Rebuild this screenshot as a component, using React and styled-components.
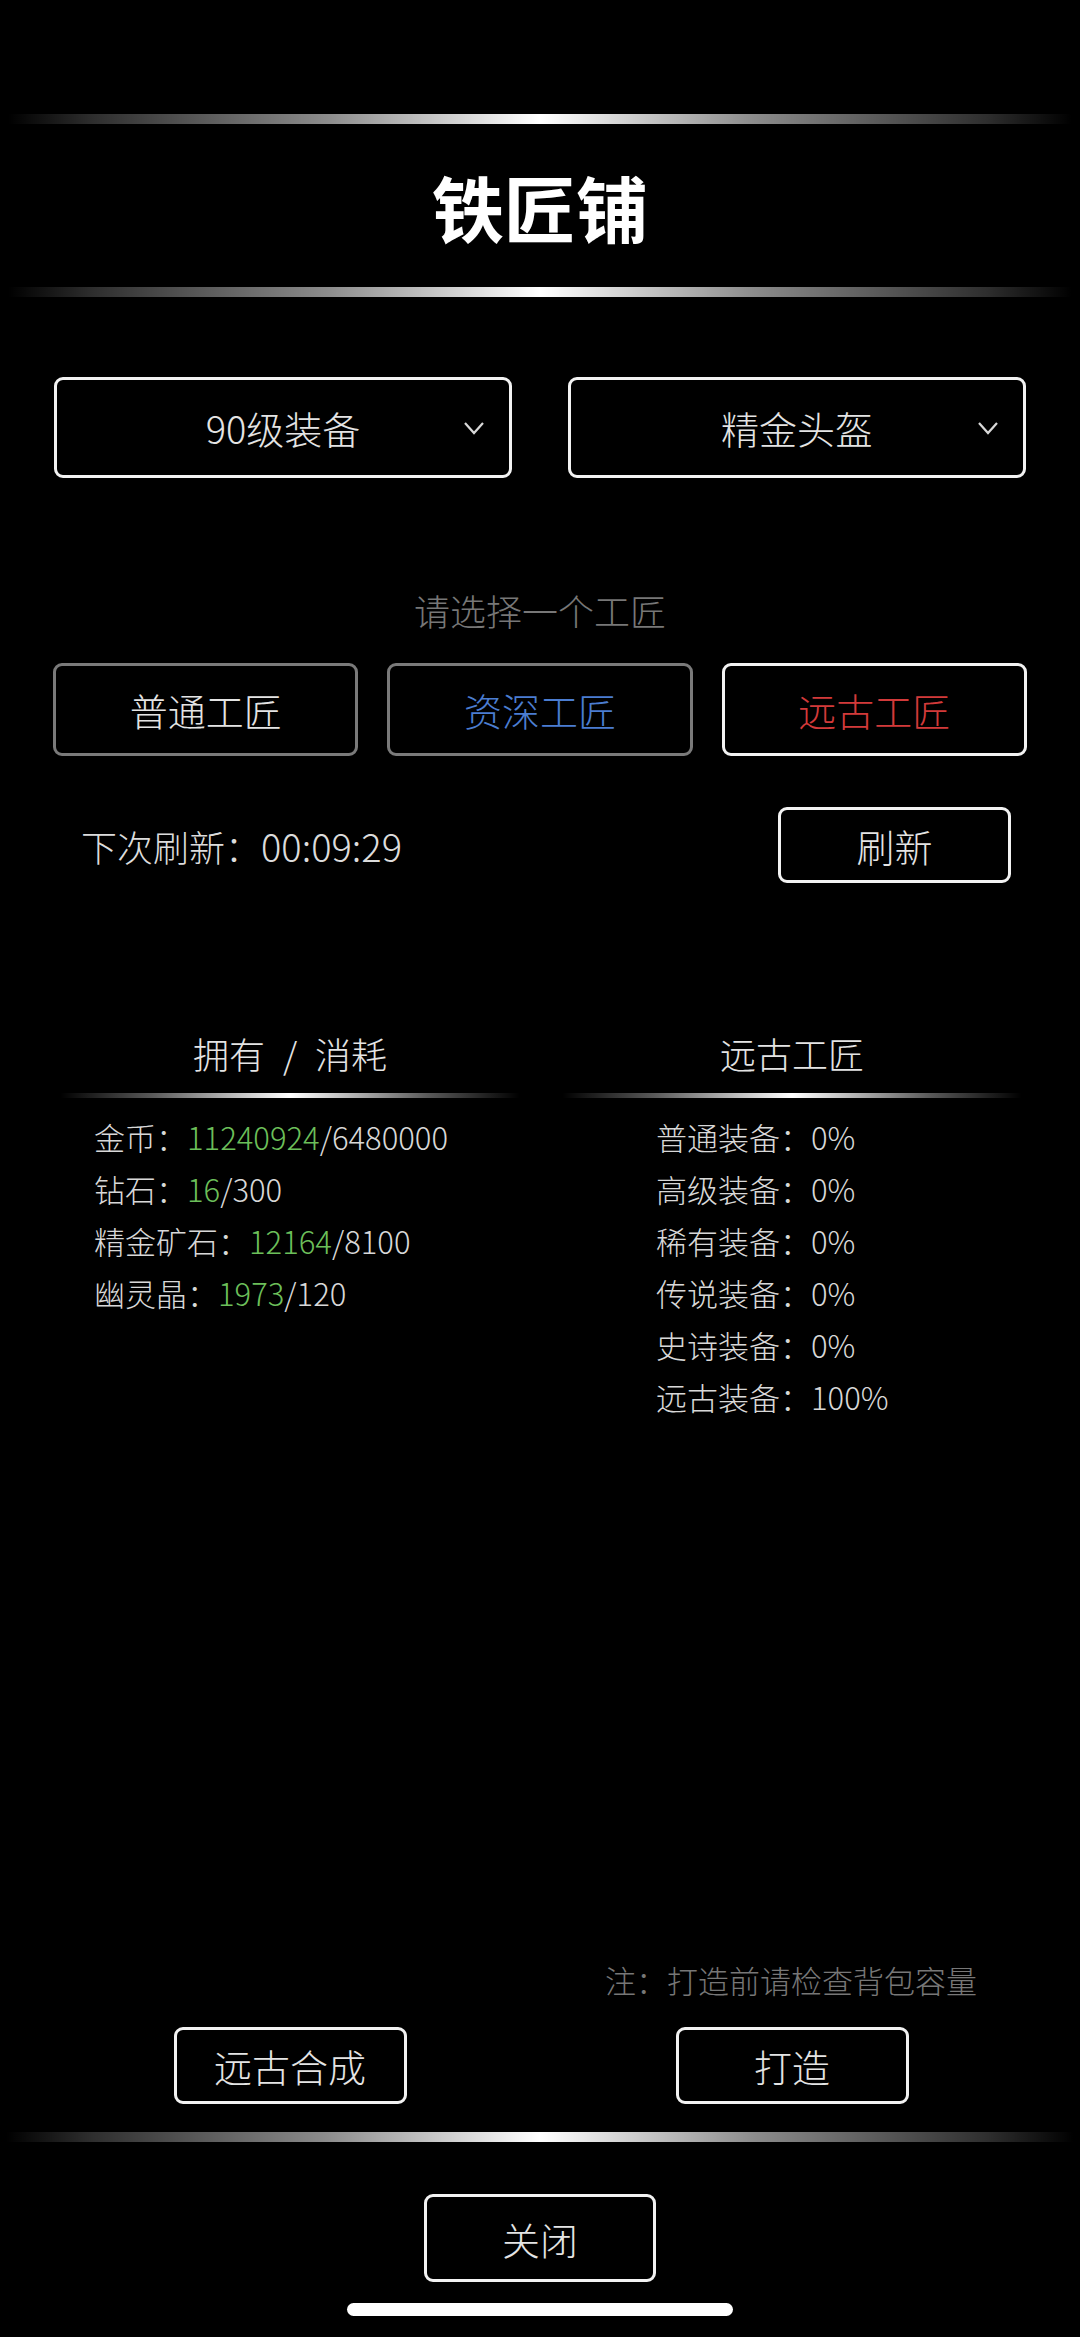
import React from 'react'
import styled, { createGlobalStyle } from 'styled-components'

const GlobalStyle = createGlobalStyle`
  html, body {
    margin: 0;
    padding: 0;
    background: #000;
  }
  body {
    font-family: "Noto Sans CJK SC", "Noto Sans", sans-serif;
    font-weight: 300;
    color: #dcdcdc;
  }
  * {
    box-sizing: border-box;
  }
`

const Page = styled.div`
  width: 1080px;
  min-height: 2337px;
  padding-top: 114px;
  display: flex;
  flex-direction: column;
  background: #000;
`

const MetalBar = styled.div`
  height: ${p => p.$h || 10}px;
  margin: ${p => p.$top || 0}px ${p => p.$inset || 8}px 0;
  background: linear-gradient(
    90deg,
    rgba(255, 255, 255, 0) 0%,
    rgba(255, 255, 255, 0.18) 8%,
    rgba(255, 255, 255, 0.55) 30%,
    #ffffff 50%,
    rgba(255, 255, 255, 0.55) 70%,
    rgba(255, 255, 255, 0.18) 92%,
    rgba(255, 255, 255, 0) 100%
  );
`

const Title = styled.h1`
  margin: 0;
  height: 163px;
  display: flex;
  align-items: center;
  justify-content: center;
  font-size: 72px;
  font-weight: 700;
  color: #fff;
`

const SelectRow = styled.div`
  margin-top: 80px;
  padding: 0 54px;
  display: grid;
  grid-template-columns: 1fr 1fr;
  gap: 56px;
`

const Select = styled.div`
  height: 101px;
  border: 3px solid #f2f2f2;
  border-radius: 9px;
  display: grid;
  grid-template-columns: 1fr auto 1fr;
  align-items: center;
  padding-right: 24px;
  font-size: 38px;
  color: #e4e4e4;
`

const SelectText = styled.span`
  grid-column: 2;
  line-height: 1;
  padding-left: 24px;
`

const Chevron = styled.svg`
  grid-column: 3;
  justify-self: end;
  width: 22px;
  height: 14px;
`

const Hint = styled.div`
  margin-top: 108px;
  height: 48px;
  line-height: 48px;
  text-align: center;
  font-size: 36px;
  color: #777;
`

const CraftRow = styled.div`
  margin-top: 29px;
  padding: 0 53px;
  display: grid;
  grid-template-columns: repeat(3, 1fr);
  gap: 29px;
`

const CraftButton = styled.div`
  height: 93px;
  border: 3px solid ${p => (p.$active ? '#f2f2f2' : '#7a7a7a')};
  border-radius: 9px;
  display: flex;
  align-items: center;
  justify-content: center;
  font-size: 38px;
  color: ${p => p.$color};
`

const RefreshRow = styled.div`
  margin-top: 51px;
  padding: 0 69px 0 81px;
  display: flex;
  align-items: center;
  justify-content: space-between;
  font-size: 36px;
  color: #dcdcdc;
`

const Time = styled.span`
  font-size: 38px;
`

const Button = styled.div`
  width: ${p => p.$w || 233}px;
  height: ${p => p.$h || 77}px;
  border: 3px solid #f2f2f2;
  border-radius: 9px;
  display: flex;
  align-items: center;
  justify-content: center;
  font-size: 38px;
  color: #e4e4e4;
`

const Stats = styled.div`
  margin-top: 146px;
  padding: 0 58px 0 60px;
  display: grid;
  grid-template-columns: 1fr 1fr;
  column-gap: 42px;
`

const Column = styled.div`
  display: flex;
  flex-direction: column;
`

const ColumnHead = styled.div`
  height: 48px;
  line-height: 48px;
  text-align: center;
  font-size: 36px;
  color: #e4e4e4;
`

const Slash = styled.span`
  margin: 0 18px;
`

const Line = styled.div`
  margin-top: 16px;
  height: 5px;
  background: linear-gradient(
    90deg,
    rgba(255, 255, 255, 0) 0%,
    rgba(255, 255, 255, 0.35) 20%,
    #ffffff 50%,
    rgba(255, 255, 255, 0.35) 80%,
    rgba(255, 255, 255, 0) 100%
  );
`

const List = styled.div`
  margin-top: 13px;
  padding-left: ${p => p.$inset}px;
  display: flex;
  flex-direction: column;
`

const Row = styled.div`
  height: 52px;
  line-height: 52px;
  font-size: 31px;
  color: #d8d8d8;
  white-space: nowrap;
`

const Have = styled.span`
  color: #6cbf5a;
`

const Footer = styled.div`
  margin-top: auto;
  display: flex;
  flex-direction: column;
`

const Note = styled.div`
  height: 44px;
  line-height: 44px;
  padding-right: 103px;
  text-align: right;
  font-size: 31px;
  color: #777;
`

const ActionRow = styled.div`
  margin-top: 25px;
  padding: 0 58px 0 60px;
  display: grid;
  grid-template-columns: 1fr 1fr;
  column-gap: 42px;
  justify-items: center;
`

const CloseWrap = styled.div`
  margin-top: 52px;
  display: flex;
  justify-content: center;
`

const HomeIndicator = styled.div`
  margin: 21px auto 21px;
  width: 386px;
  height: 13px;
  border-radius: 7px;
  background: #fff;
`

const owned = [
  { name: '金币', have: '11240924', need: '6480000' },
  { name: '钻石', have: '16', need: '300' },
  { name: '精金矿石', have: '12164', need: '8100' },
  { name: '幽灵晶', have: '1973', need: '120' },
]

const odds = [
  ['普通装备', '0%'],
  ['高级装备', '0%'],
  ['稀有装备', '0%'],
  ['传说装备', '0%'],
  ['史诗装备', '0%'],
  ['远古装备', '100%'],
]

const crafters = [
  { name: '普通工匠', color: '#e4e4e4' },
  { name: '资深工匠', color: '#4b7dd1' },
  { name: '远古工匠', color: '#d23a3a', active: true },
]

const Dropdown = ({ label }) => (
  <Select>
    <SelectText>{label}</SelectText>
    <Chevron viewBox="0 0 22 14">
      <polyline points="2,2 11,12 20,2" fill="none" stroke="#d8d8d8" strokeWidth="2.2" />
    </Chevron>
  </Select>
)

export default function App() {
  return (
    <Page>
      <GlobalStyle />
      <MetalBar />
      <Title>铁匠铺</Title>
      <MetalBar />

      <SelectRow>
        <Dropdown label="90级装备" />
        <Dropdown label="精金头盔" />
      </SelectRow>

      <Hint>请选择一个工匠</Hint>
      <CraftRow>
        {crafters.map(c => (
          <CraftButton key={c.name} $color={c.color} $active={c.active}>
            {c.name}
          </CraftButton>
        ))}
      </CraftRow>

      <RefreshRow>
        <span>
          下次刷新：<Time>00:09:29</Time>
        </span>
        <Button $w={233} $h={76}>刷新</Button>
      </RefreshRow>

      <Stats>
        <Column>
          <ColumnHead>
            拥有<Slash>/</Slash>消耗
          </ColumnHead>
          <Line />
          <List $inset={34}>
            {owned.map(o => (
              <Row key={o.name}>
                {o.name}：<Have>{o.have}</Have>/{o.need}
              </Row>
            ))}
          </List>
        </Column>
        <Column>
          <ColumnHead>远古工匠</ColumnHead>
          <Line />
          <List $inset={94}>
            {odds.map(([k, v]) => (
              <Row key={k}>
                {k}：{v}
              </Row>
            ))}
          </List>
        </Column>
      </Stats>

      <Footer>
        <Note>注：打造前请检查背包容量</Note>
        <ActionRow>
          <Button>远古合成</Button>
          <Button>打造</Button>
        </ActionRow>
        <MetalBar $h={10} $inset={6} $top={28} />
        <CloseWrap>
          <Button $w={232} $h={88}>关闭</Button>
        </CloseWrap>
        <HomeIndicator />
      </Footer>
    </Page>
  )
}
